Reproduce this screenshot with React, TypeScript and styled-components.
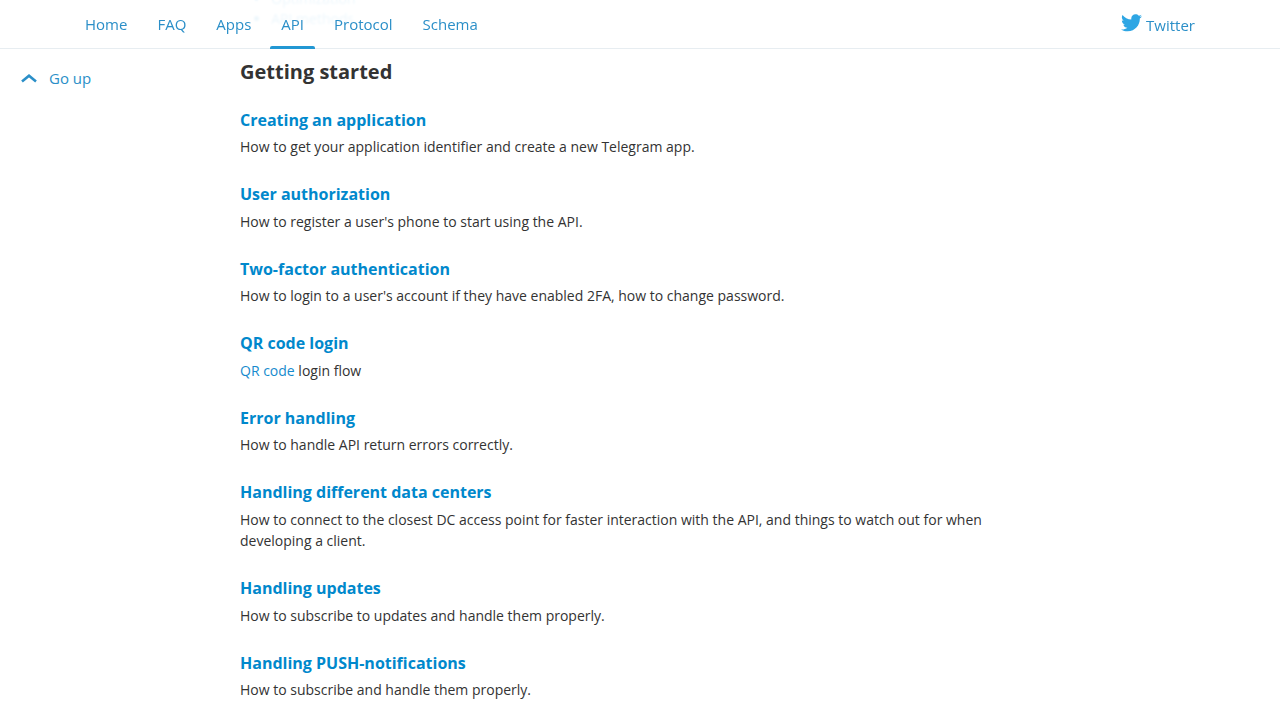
import styled, { createGlobalStyle } from 'styled-components';

const GlobalStyle = createGlobalStyle`
    html, body {
        margin: 0;
        padding: 0;
        height: 720px;
        overflow: hidden;
        background: #fff;
    }

    body {
        font-family: "Open Sans", "Liberation Sans", sans-serif;
        font-size: 14px;
        color: #333;
    }
`;

const Page = styled.div`
    position: relative;
    height: 720px;
    overflow: hidden;
`;

// the header is see-through, the list that scrolled away shows behind it
const Behind = styled.ul`
    position: absolute;
    top: -11px;
    left: 240px;
    margin: 0;
    padding: 0 0 0 31px;
    font-size: 14px;
    line-height: 20px;
    color: #0088cc;
`;

const Header = styled.header`
    position: relative;
    z-index: 1;
    height: 48px;
    display: flex;
    justify-content: space-between;
    padding: 0 85px;
    background: rgba(255, 255, 255, 0.93);
    backdrop-filter: blur(1px);
    border-bottom: 1px solid #e7edf1;
`;

const Nav = styled.nav`
    display: flex;
    gap: 30px;
`;

const NavLink = styled.a<{ $active?: boolean }>`
    position: relative;
    height: 48px;
    line-height: 48px;
    font-size: 15px;
    color: #2b8fc8;

    ${(p) =>
        p.$active &&
        `&::after {
            content: '';
            position: absolute;
            left: -11px;
            right: -11px;
            bottom: -1px;
            height: 3px;
            border-radius: 2px 2px 0 0;
            background: #2297d3;
        }`}
`;

const TwitterLink = styled.a`
    display: flex;
    align-items: center;
    gap: 4px;
    height: 46px;
    padding-top: 2px;
    font-size: 15px;
    color: #2b8fc8;

    svg {
        margin-top: -4px;
    }
`;

const Body = styled.div`
    display: flex;
    height: 671px;
`;

const Side = styled.aside`
    width: 240px;
    flex: none;
    padding: 18px 0 0 21px;
    box-sizing: border-box;
`;

const GoUp = styled.a`
    display: flex;
    align-items: center;
    gap: 12px;
    font-size: 15px;
    line-height: 22px;
    color: #2b8fc8;

    svg {
        margin-top: -1px;
    }
`;

const Main = styled.main`
    width: 760px;
    padding-top: 9px;
`;

const Title = styled.h3`
    margin: 0 0 21.7px;
    font-size: 20px;
    line-height: 28px;
    font-weight: 700;
    color: #333;
`;

const Section = styled.section`
    margin-bottom: 25px;
`;

const SectionTitle = styled.h4`
    margin: 0 0 4.55px;
    font-size: 16px;
    line-height: 24px;
    font-weight: 700;
    color: #0088cc;
`;

const Text = styled.p`
    margin: 0;
    font-size: 14px;
    line-height: 21px;
    color: #333;

    a {
        color: #168acd;
    }
`;

const sections = [
    ['Creating an application', 'How to get your application identifier and create a new Telegram app.'],
    ['User authorization', "How to register a user's phone to start using the API."],
    ['Two-factor authentication', "How to login to a user's account if they have enabled 2FA, how to change password."],
    ['QR code login', null],
    ['Error handling', 'How to handle API return errors correctly.'],
    [
        'Handling different data centers',
        'How to connect to the closest DC access point for faster interaction with the API, and things to watch out for when developing a client.',
    ],
    ['Handling updates', 'How to subscribe to updates and handle them properly.'],
    ['Handling PUSH-notifications', 'How to subscribe and handle them properly.'],
];

function App() {
    return (
        <Page>
            <GlobalStyle />
            <Behind>
                <li>Optimization</li>
                <li>API methods</li>
            </Behind>
            <Header>
                <Nav>
                    <NavLink>Home</NavLink>
                    <NavLink>FAQ</NavLink>
                    <NavLink>Apps</NavLink>
                    <NavLink $active>API</NavLink>
                    <NavLink>Protocol</NavLink>
                    <NavLink>Schema</NavLink>
                </Nav>
                <TwitterLink>
                    <svg width="21" height="18" viewBox="0 0 24 20" fill="#2ea6e4">
                        <path d="M24 2.4c-.9.4-1.8.7-2.8.8 1-.6 1.8-1.6 2.2-2.7-1 .6-2 1-3.100 1.200C19.300.7 18 .1 16.600.1c-2.700 0-4.900 2.200-4.900 4.900 0 .4 0 .8.100 1.100C7.700 5.900 4.100 4 1.700.9c-.4.7-.7 1.600-.7 2.500 0 1.700.9 3.200 2.200 4.100-.8 0-1.600-.2-2.200-.6v.1c0 2.400 1.700 4.400 3.900 4.800-.4.100-.8.200-1.300.2-.3 0-.6 0-.9-.1.600 2 2.400 3.400 4.600 3.400-1.700 1.300-3.800 2.100-6.100 2.100-.4 0-.8 0-1.200-.1 2.200 1.400 4.800 2.200 7.500 2.200 9.100 0 14-7.500 14-14v-.6c1-.7 1.800-1.600 2.500-2.500z" />
                    </svg>
                    Twitter
                </TwitterLink>
            </Header>
            <Body>
                <Side>
                    <GoUp>
                        <svg width="16" height="10" viewBox="0 0 16 10" fill="none" stroke="#2b8fc8" strokeWidth="2.600">
                            <path d="M1 8.500 8 2.800 15 8.500" />
                        </svg>
                        Go up
                    </GoUp>
                </Side>
                <Main>
                    <Title>Getting started</Title>
                    {sections.map(([title, text]) => (
                        <Section key={title}>
                            <SectionTitle>{title}</SectionTitle>
                            {text ? (
                                <Text>{text}</Text>
                            ) : (
                                <Text>
                                    <a>QR code</a> login flow
                                </Text>
                            )}
                        </Section>
                    ))}
                </Main>
            </Body>
        </Page>
    );
}

export default App;
